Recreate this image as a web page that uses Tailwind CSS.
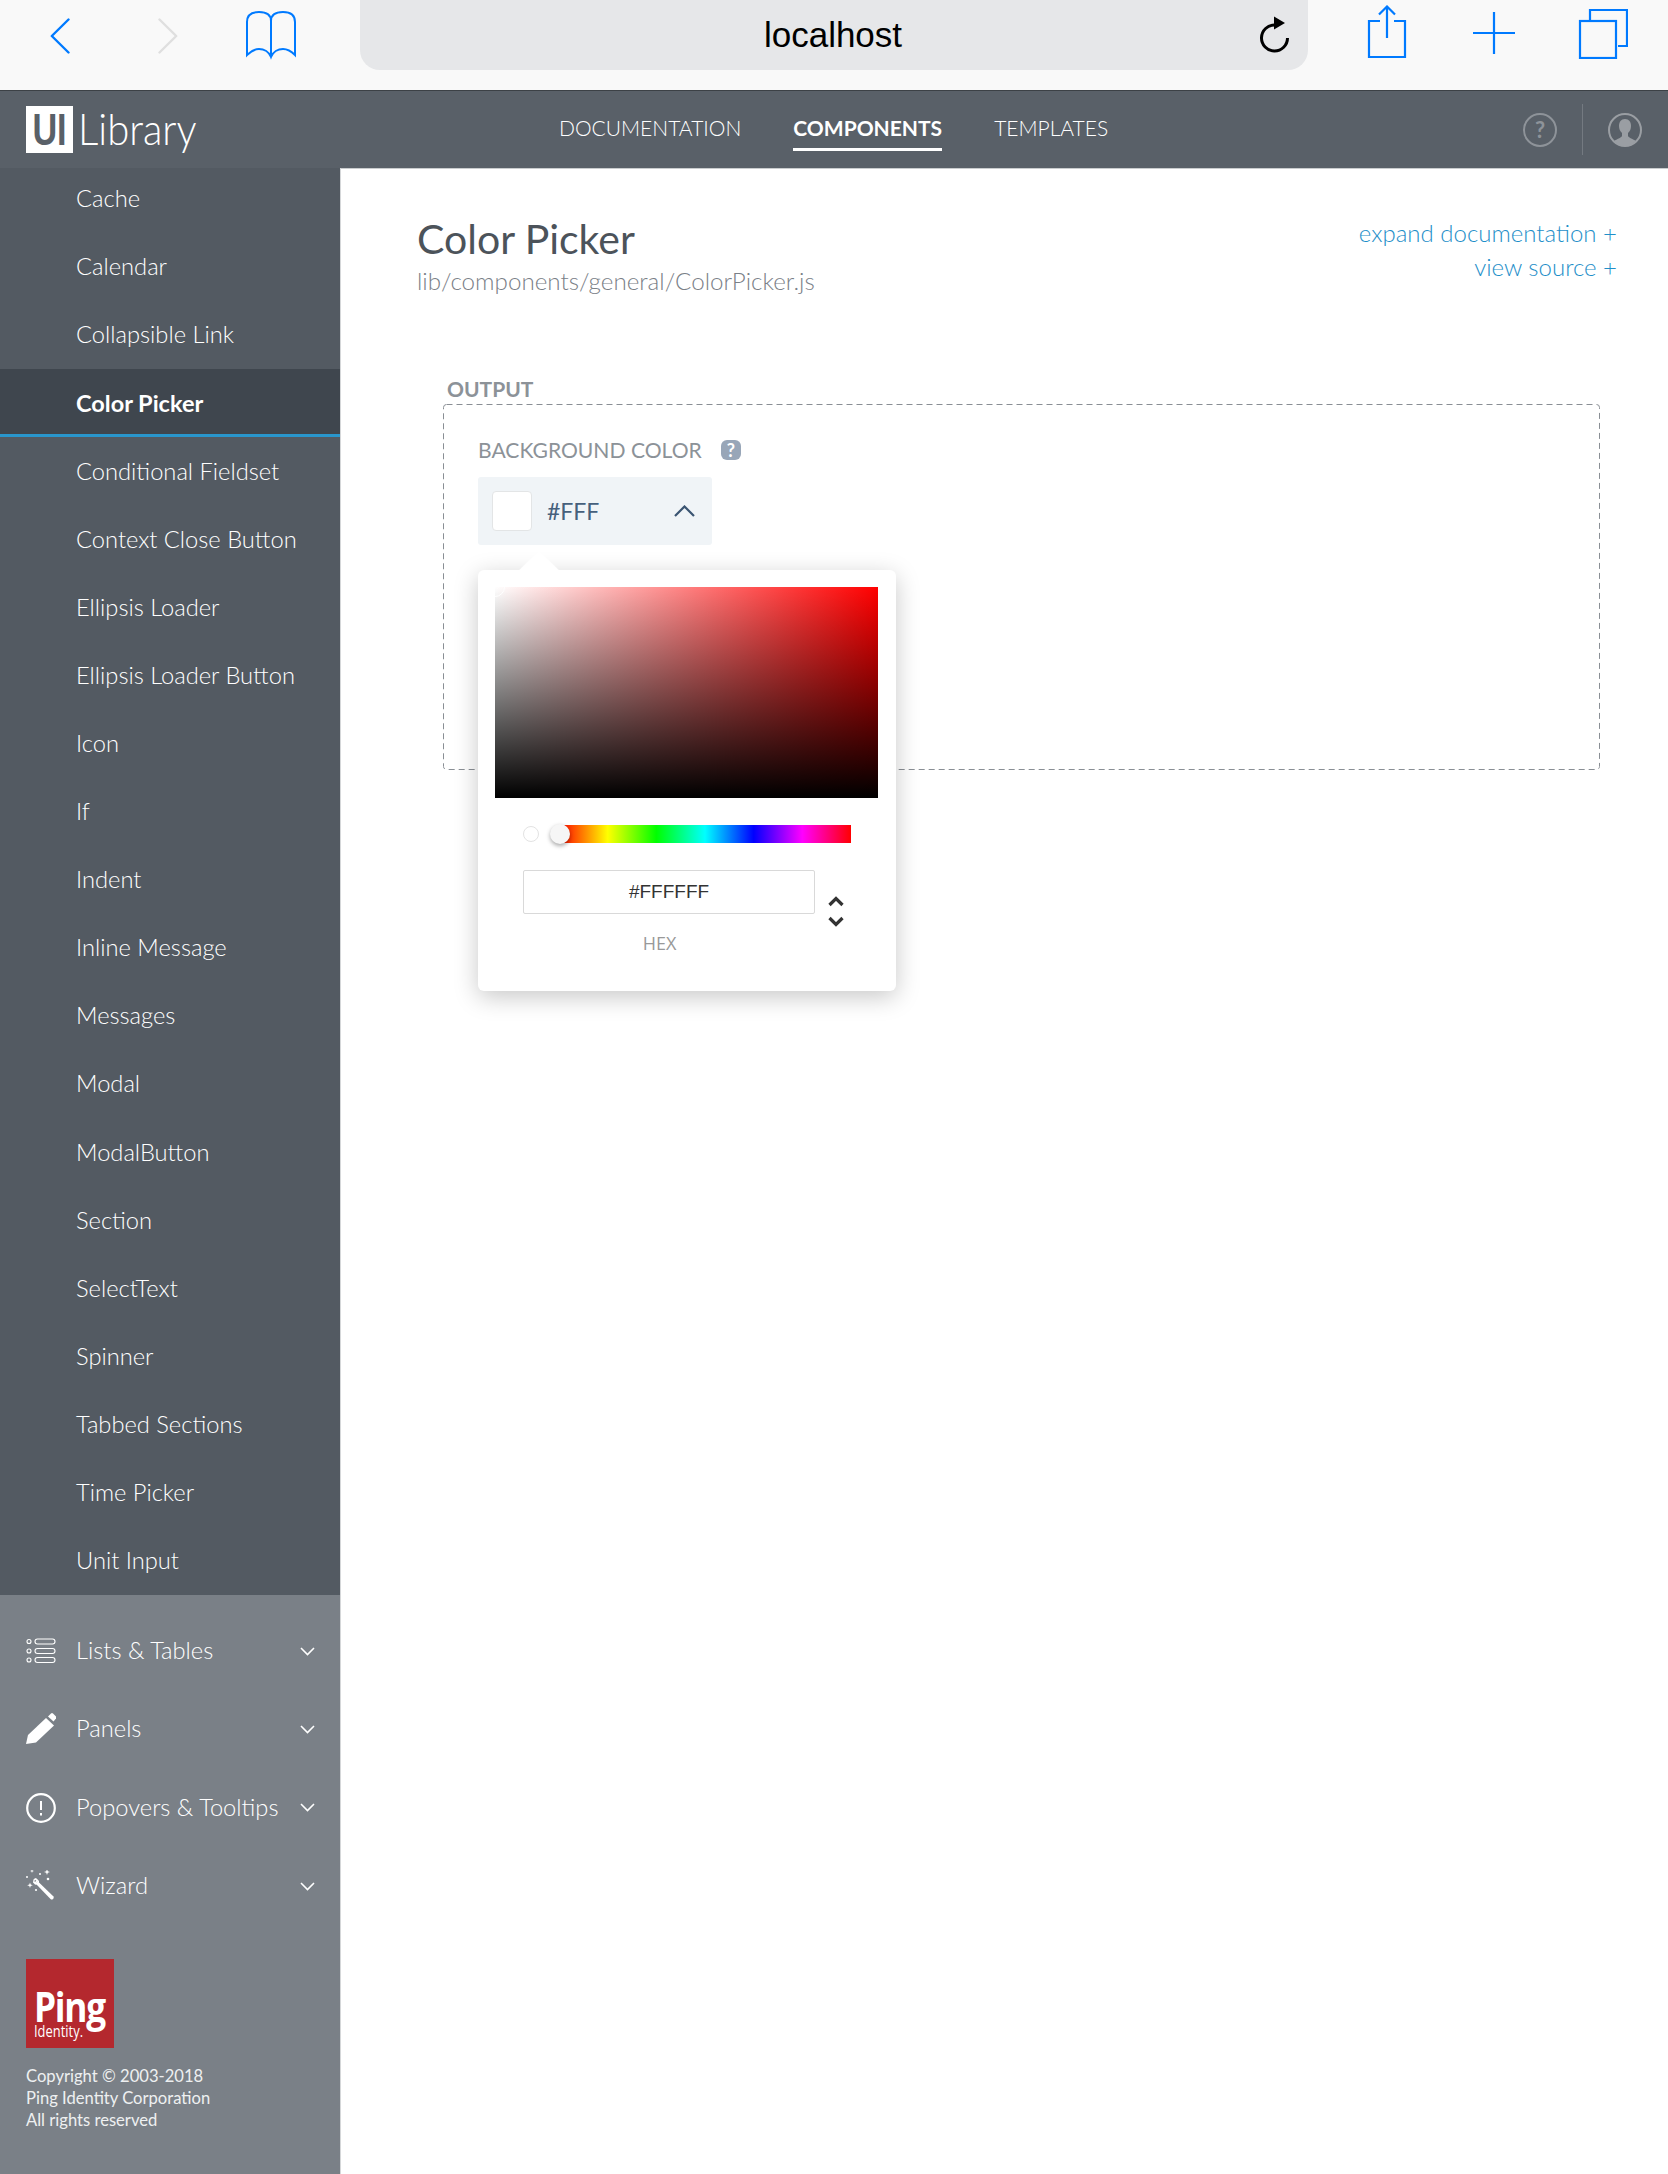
<!DOCTYPE html>
<html lang="en">
<head>
  <meta charset="UTF-8" />
  <title>UI Library - Color Picker</title>
  <script src="https://cdn.jsdelivr.net/npm/@tailwindcss/browser@4"></script>
</head>
<body class="w-[1668px] h-[2174px] overflow-hidden bg-white font-['Lato','Liberation_Sans',sans-serif]">

  <!-- browser toolbar -->
  <div class="flex h-[90px] bg-[#f9f9f9]">
    <svg class="ml-[50px] mt-[18px] w-[20px] h-[36px]" viewBox="0 0 20 36" fill="none" stroke="#007aff" stroke-width="2.4" stroke-linecap="round" stroke-linejoin="round"><path d="M18.5 1.5 1.8 18l16.7 16.5"/></svg>
    <svg class="ml-[88px] mt-[18px] w-[20px] h-[36px]" viewBox="0 0 20 36" fill="none" stroke="#dfdfdf" stroke-width="2.4" stroke-linecap="round" stroke-linejoin="round"><path d="M1.5 1.5 18.2 18 1.5 34.5"/></svg>
    <svg class="ml-[67px] mt-[10px] w-[52px] h-[50px]" viewBox="0 0 52 50" fill="none" stroke="#007aff" stroke-width="2"><path d="M26 11C26 4 20 2 14 2 7 2 2 5 2 12v33c5-5 8-6 12-6 5 0 10 3 12 8 2-5 7-8 12-8 4 0 7 1 12 6V12c0-7-5-10-12-10-6 0-12 2-12 9Zm0 0v36"/></svg>
    <div class="ml-[63px] w-[948px] h-[70px] rounded-b-[20px] bg-[#e6e7e9] flex items-center relative">
      <span class="w-full text-center text-[35px] text-black font-['Liberation_Sans',sans-serif] -translate-x-[1px]">localhost</span>
      <svg class="absolute right-[18px] top-[15px] w-[32px] h-[38px]" viewBox="0 0 32 38" fill="none"><path d="M17 10A13 13 0 1 0 29.500 23" stroke="#000" stroke-width="3"/><path d="M16 1.500 27 8 16 14.500Z" fill="#000"/></svg>
    </div>
    <svg class="ml-[59px] mt-[5px] w-[40px] h-[54px]" viewBox="0 0 40 54" fill="none" stroke="#007aff" stroke-width="2.2"><path d="M13 16H2v36h36V16H27"/><path d="M20 1.5V33M12 9.5l8-8 8 8"/></svg>
    <svg class="ml-[65px] mt-[11px] w-[44px] h-[44px]" viewBox="0 0 44 44" fill="none" stroke="#007aff" stroke-width="2.2"><path d="M22 1v42M1 22h42"/></svg>
    <svg class="ml-[62px] mt-[8px] w-[50px] h-[51px]" viewBox="0 0 50 51" fill="none" stroke="#007aff" stroke-width="2.2"><path d="M12 12V2h37v36H40"/><rect x="2" y="13" width="36" height="37"/></svg>
  </div>

  <!-- app header -->
  <header class="relative z-10 flex items-center h-[78px] bg-[#596068] border-t border-[#3c4146]">
    <div class="flex items-center w-[559px] pl-[26px]">
      <div class="flex items-center justify-center w-[47px] h-[47px] bg-white text-[#596068] text-[45px] font-bold leading-none font-['Liberation_Sans',sans-serif]"><span class="scale-x-[.76]">UI</span></div>
      <span class="ml-[5px] -mt-[3px] text-[44px] font-light text-white leading-none scale-x-[.91] origin-left">Library</span>
    </div>
    <nav class="flex gap-[52px] text-[21px] text-white">
      <a class="font-light h-[43px] pt-[4px]">DOCUMENTATION</a>
      <a class="font-bold h-[43px] pt-[4px] border-b-[3px] border-white">COMPONENTS</a>
      <a class="font-light h-[43px] pt-[4px]">TEMPLATES</a>
    </nav>
    <div class="ml-auto flex items-center pr-[26px]">
      <div class="flex items-center justify-center w-[34px] h-[34px] rounded-full border-2 border-[#8e9399] text-[#8e9399] text-[22px] font-bold">?</div>
      <div class="mx-[25px] w-px h-[51px] bg-[#747a81]"></div>
      <svg class="w-[34px] h-[34px]" viewBox="0 0 34 34"><circle cx="17" cy="17" r="16" fill="none" stroke="#9a9ea3" stroke-width="2"/><path d="M17 6c-4 0-6 3-6 7 0 3 1 5 3 7v3c-1 2-5 3-8 5 3 3 7 5 11 5s8-2 11-5c-3-2-7-3-8-5v-3c2-2 3-4 3-7 0-4-2-7-6-7Z" fill="#9a9ea3"/></svg>
    </div>
  </header>

  <div class="flex">
    <!-- sidebar -->
    <aside class="w-[341px] h-[2009px] shrink-0 border-r border-[#d5d7d9] bg-[#7a8087] -mt-[3px]">
      <ul class="h-[1430px] overflow-hidden bg-[#535a62] text-[23.7px] font-light text-white">
        <li class="h-[68.1px] flex items-center pl-[76px]">Cache</li>
        <li class="h-[68.1px] flex items-center pl-[76px]">Calendar</li>
        <li class="h-[68.1px] flex items-center pl-[76px]">Collapsible Link</li>
        <li class="h-[68.1px] flex items-center pl-[76px] pt-[3px] bg-[#3f464e] font-bold text-[23.5px] border-b-[3px] border-[#2996cc]">Color Picker</li>
        <li class="h-[68.1px] flex items-center pl-[76px]">Conditional Fieldset</li>
        <li class="h-[68.1px] flex items-center pl-[76px]">Context Close Button</li>
        <li class="h-[68.1px] flex items-center pl-[76px]">Ellipsis Loader</li>
        <li class="h-[68.1px] flex items-center pl-[76px]">Ellipsis Loader Button</li>
        <li class="h-[68.1px] flex items-center pl-[76px]">Icon</li>
        <li class="h-[68.1px] flex items-center pl-[76px]">If</li>
        <li class="h-[68.1px] flex items-center pl-[76px]">Indent</li>
        <li class="h-[68.1px] flex items-center pl-[76px]">Inline Message</li>
        <li class="h-[68.1px] flex items-center pl-[76px]">Messages</li>
        <li class="h-[68.1px] flex items-center pl-[76px]">Modal</li>
        <li class="h-[68.1px] flex items-center pl-[76px]">ModalButton</li>
        <li class="h-[68.1px] flex items-center pl-[76px]">Section</li>
        <li class="h-[68.1px] flex items-center pl-[76px]">SelectText</li>
        <li class="h-[68.1px] flex items-center pl-[76px]">Spinner</li>
        <li class="h-[68.1px] flex items-center pl-[76px]">Tabbed Sections</li>
        <li class="h-[68.1px] flex items-center pl-[76px]">Time Picker</li>
        <li class="h-[68.1px] flex items-center pl-[76px]">Unit Input</li>
      </ul>

      <div class="pt-[17px] text-[23.7px] font-light text-white">
        <div class="flex items-center h-[78px] pl-[26px] pr-[25px]">
          <svg class="w-[30px] h-[26px]" viewBox="0 0 30 26" fill="none" stroke="#fff" stroke-width="1.1"><circle cx="3" cy="3.5" r="2"/><circle cx="3" cy="13" r="2"/><circle cx="3" cy="22" r="2"/><rect x="9" y="1" width="20" height="5" rx="2.5"/><rect x="9" y="10.5" width="20" height="5" rx="2.5"/><rect x="9" y="19.5" width="20" height="5" rx="2.5"/></svg>
          <span class="ml-[20px]">Lists &amp; Tables</span>
          <svg class="ml-auto w-[15px] h-[9px]" viewBox="0 0 15 9" fill="none" stroke="#fff" stroke-width="1.6"><path d="M1 1l6.5 6.5L14 1"/></svg>
        </div>
        <div class="flex items-center h-[78px] pl-[26px] pr-[25px]">
          <svg class="w-[30px] h-[32px]" viewBox="0 0 30 32" fill="#fff"><path d="M0 31l2-9L20 5l8 7.500L10 29.500Z"/><path d="M22 3.500l3-3q1-.8 2 0l3 3q.8 1 0 2l-2.500 3Z"/></svg>
          <span class="ml-[20px]">Panels</span>
          <svg class="ml-auto w-[15px] h-[9px]" viewBox="0 0 15 9" fill="none" stroke="#fff" stroke-width="1.6"><path d="M1 1l6.5 6.5L14 1"/></svg>
        </div>
        <div class="flex items-center h-[79px] pl-[26px] pr-[25px]">
          <svg class="w-[30px] h-[32px]" viewBox="0 0 30 32" fill="none" stroke="#fff" stroke-width="2.2"><circle cx="15" cy="16" r="13.800"/><path d="M15 9v9" stroke-width="2"/><path d="M15 21v2.500" stroke-width="2"/></svg>
          <span class="ml-[20px]">Popovers &amp; Tooltips</span>
          <svg class="ml-auto w-[15px] h-[9px]" viewBox="0 0 15 9" fill="none" stroke="#fff" stroke-width="1.6"><path d="M1 1l6.5 6.5L14 1"/></svg>
        </div>
        <div class="flex items-center h-[78px] pl-[26px] pr-[25px]">
          <svg class="w-[30px] h-[32px]" viewBox="0 0 30 32" fill="#fff"><path d="M8.500 12.500l3-3 .9.9-3 3Z"/><path d="M7.500 9.500q1-1.500 2.500-1.500l3 3q.5 1.500-1 3-1.500 1-3 .5l-2-2Zm1.700.500-1 1 1.500 1.800 1.800-1.300Z" fill-rule="evenodd"/><path d="M12.500 12l15 14.500q.8 1.500-.5 2.500-1.300 1-2.500 0L10.500 14.500Z"/><path d="M21 -1l.8 2.200 2.200.8-2.200.8L21 5l-.8-2.200-2.200-.8 2.200-.8ZM6 -1l.5 1.500L8 1l-1.500.5L6 3l-.5-1.500L4 1l1.500-.5ZM4 12.500l.7 2.100 2.100.7-2.100.7L4 18.100l-.7-2.100-2.100-.7 2.100-.7Z"/><circle cx="1" cy="7" r="1"/><circle cx="14" cy="4" r="1"/><circle cx="22" cy="9" r="1.300"/><circle cx="10" cy="20" r="1.100"/></svg>
          <span class="ml-[20px]">Wizard</span>
          <svg class="ml-auto w-[15px] h-[9px]" viewBox="0 0 15 9" fill="none" stroke="#fff" stroke-width="1.6"><path d="M1 1l6.5 6.5L14 1"/></svg>
        </div>
      </div>

      <div class="pl-[26px] pt-[34px]">
        <div class="w-[88px] h-[89px] bg-[#b4282e] text-white pl-[8px] pt-[28px] font-['Open_Sans','Liberation_Sans',sans-serif]">
          <div class="h-[38px] text-[41px] font-bold leading-[38px] tracking-[-1.5px] scale-x-[.86] origin-left">Ping</div>
          <div class="h-[14px] -mt-[1px] text-[17px] leading-[14px] scale-x-[.76] origin-left">Identity.</div>
        </div>
        <p class="mt-[17px] text-[16.6px] leading-[22px] text-[#eef0f1]">Copyright © 2003-2018<br>Ping Identity Corporation<br>All rights reserved</p>
      </div>
    </aside>

    <!-- main content -->
    <main class="flex-1 pl-[76px] pr-[51px] border-t border-[#c9ccce]">
      <div class="flex justify-between pt-[46px]">
        <div>
          <h1 class="text-[41px] leading-[48px] text-[#4c535a]">Color Picker</h1>
          <p class="text-[24.2px] leading-[36px] font-light text-[#7a8087]">lib/components/general/ColorPicker.js</p>
        </div>
        <div class="text-right text-[24px] leading-[34px] font-light text-[#1f8fc9]">
          <div class="mt-[1px]">expand documentation +</div>
          <div>view source +</div>
        </div>
      </div>

      <section class="relative ml-[26px] mr-[17px] mt-[105px] h-[366px] pl-[35px] pt-[34px]">
        <svg class="absolute left-0 top-0 w-[1157px] h-[366px]" fill="none"><rect x="0.500" y="0.500" width="1156" height="365" rx="3" stroke="#8a8f95" stroke-dasharray="6 4"/></svg>
        <div class="absolute left-[4px] -top-[27px] text-[21px] leading-[24px] font-bold text-[#8c9298]">OUTPUT</div>
        <div class="relative flex items-center h-[24px] text-[21.1px] text-[#8c9298]">
          BACKGROUND COLOR
          <span class="ml-[19px] flex items-center justify-center w-[20px] h-[20px] rounded-[6px] bg-[#98a6b8] text-white text-[18px] font-bold">?</span>
        </div>
        <div class="relative flex items-center mt-[15px] w-[234px] h-[68px] rounded-[3px] bg-[#f0f4f7] pl-[14px] pr-[17px]">
          <div class="w-[40px] h-[40px] rounded-[4px] bg-white border border-[#e3e5e6]"></div>
          <span class="ml-[15px] text-[23px] text-[#46607c]">#FFF</span>
          <svg class="ml-auto w-[21px] h-[12px]" viewBox="0 0 21 12" fill="none" stroke="#3b5572" stroke-width="2.2"><path d="M1 11l9.500-9.500L20 11"/></svg>
        </div>

        <!-- color picker popover -->
        <div class="absolute left-[35px] top-[166px] w-[418px] h-[421px] rounded-[6px] bg-white shadow-[0_6px_24px_rgba(0,0,0,0.22)] z-10">
          <div class="absolute left-[47px] -top-[14px] w-[28px] h-[28px] rotate-45 bg-white"></div>
          <div class="relative mx-[17px] mt-[17px] w-[383px] h-[211px] overflow-hidden bg-[linear-gradient(to_top,#000,transparent),linear-gradient(to_right,#fff,#f00)]">
            <div class="absolute -left-[10px] -top-[10px] w-[20px] h-[20px] rounded-full border border-white"></div>
          </div>
          <div class="relative ml-[45px] mt-[27px] flex items-center h-[18px]">
            <div class="w-[16px] h-[16px] rounded-full bg-white border border-[#e3e3e3]"></div>
            <div class="ml-[20px] w-[292px] h-[18px] bg-[linear-gradient(to_right,#f00,#ff0,#0f0,#0ff,#00f,#f0f,#f00)]"></div>
            <div class="absolute left-[27px] -top-[1px] w-[20px] h-[20px] rounded-full bg-[#f6f6f6] shadow-[0_2px_4px_rgba(0,0,0,0.35)]"></div>
          </div>
          <div class="flex ml-[45px] mt-[27px]">
            <div class="w-[292px]">
              <div class="flex items-center justify-center h-[44px] rounded-[2px] border-[1.5px] border-[#d9d9d9] text-[19px] text-[#333] font-['Liberation_Sans',sans-serif]">#FFFFFF</div>
              <div class="mt-[17px] pr-[19px] text-center text-[18px] leading-[24px] text-[#999] font-['Open_Sans',sans-serif]">HEX</div>
            </div>
            <svg class="ml-[13px] mt-[26px] w-[16px] h-[32px]" viewBox="0 0 16 32" fill="none" stroke="#333" stroke-width="3.200"><path d="M1.500 9 8 2.500 14.500 9M1.500 22 8 28.500 14.500 22"/></svg>
          </div>
        </div>
      </section>
    </main>
  </div>
</body>
</html>
